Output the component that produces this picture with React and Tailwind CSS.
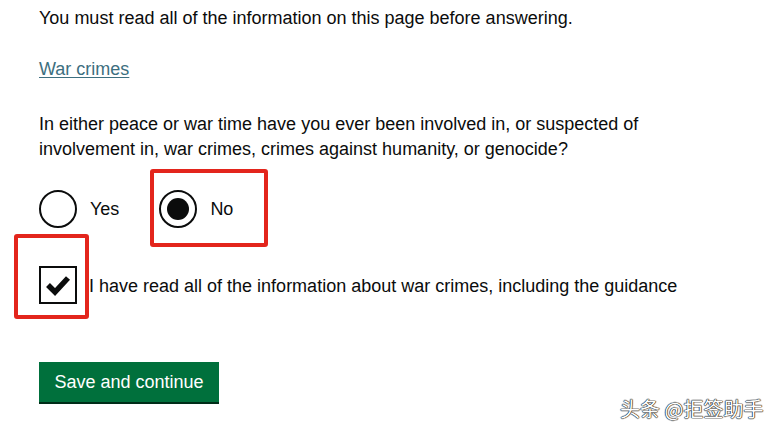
export default function App() {
  return (
    <div
      className="relative w-[774px] h-[430px] overflow-hidden bg-white text-[#0b0c0c]"
      style={{ fontFamily: '"Liberation Sans", Arial, sans-serif' }}
    >
      <div className="pl-[39px] pt-[6px]">
        <p className="text-[18px] leading-[25px]">
          You must read all of the information on this page before answering.
        </p>

        <p className="mt-[26px] text-[18px] leading-[25px]">
          <a href="#" className="text-[#3d6f80] underline underline-offset-2">
            War crimes
          </a>
        </p>

        <p className="mt-[30px] text-[18px] leading-[25px] w-[640px]">
          In either peace or war time have you ever been involved in, or suspected of
          involvement in, war crimes, crimes against humanity, or genocide?
        </p>

        <div className="mt-[28px] flex items-center gap-[40px]">
          <label className="flex items-center gap-[13px]">
            <span className="w-[38px] h-[38px] rounded-full border-2 border-[#0b0c0c] bg-white" />
            <span className="text-[18px]">Yes</span>
          </label>
          <label className="relative flex items-center gap-[13px]">
            <span className="w-[38px] h-[38px] rounded-full border-2 border-[#0b0c0c] bg-white flex items-center justify-center">
              <span className="w-[22px] h-[22px] rounded-full bg-[#0b0c0c]" />
            </span>
            <span className="text-[18px]">No</span>
            <span className="absolute left-[-9px] top-[-21px] w-[118px] h-[78px] border-[4px] border-[#e3251c] rounded-[3px]" />
          </label>
        </div>

        <div className="mt-[38px] flex items-center gap-[12px]">
          <label className="relative flex items-center">
            <span className="w-[38px] h-[38px] border-2 border-[#0b0c0c] bg-white flex items-center justify-center">
              <svg width="26" height="22" viewBox="0 0 26 22">
                <path d="M3 11 L10 18 L23 4" fill="none" stroke="#0b0c0c" strokeWidth="5.5" strokeLinejoin="miter" />
              </svg>
            </span>
            <span className="absolute left-[-25px] top-[-32px] w-[75px] h-[85px] border-[4px] border-[#e3251c] rounded-[3px]" />
          </label>
          <span className="text-[18px] leading-[25px] pt-[3px]">
            I have read all of the information about war crimes, including the guidance
          </span>
        </div>

        <button className="mt-[58px] w-[180px] h-[40px] bg-[#00703c] text-white text-[18px] shadow-[0_2px_0_#002d18]">
          Save and continue
        </button>
      </div>

      <div
        className="absolute left-[620px] top-[394px] text-[20px] text-white [text-shadow:0_0_1px_#222,0_0_1px_#222,0_0_1px_#222,0_0_1px_#222]"
        style={{ fontFamily: '"Noto Sans CJK SC", sans-serif' }}
      >
        头条 @拒签助手
      </div>
    </div>
  );
}
